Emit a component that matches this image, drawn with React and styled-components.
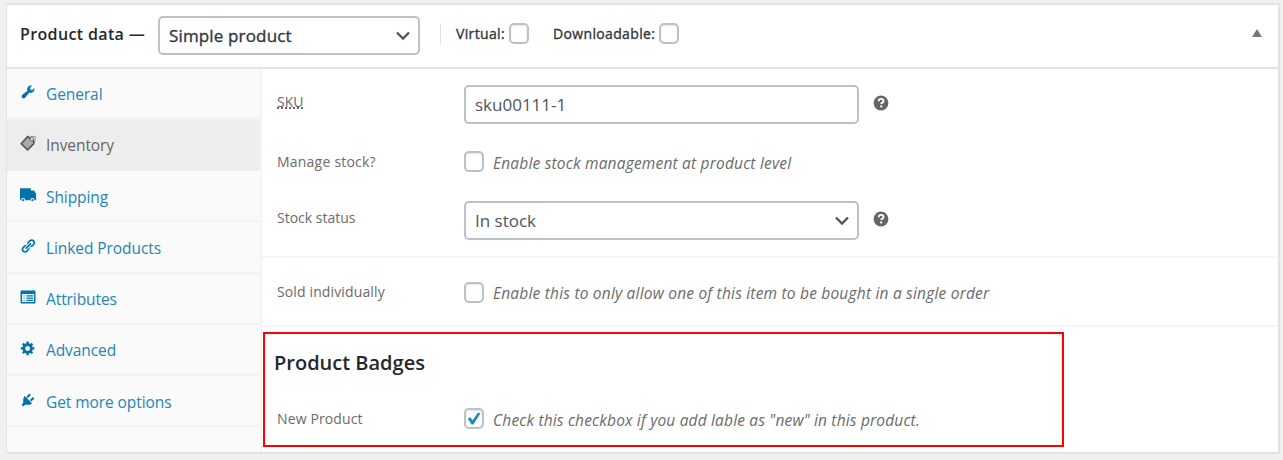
import React from "react";
import styled, { createGlobalStyle } from "styled-components";

const Global = createGlobalStyle`
  * { box-sizing: border-box; }
  body {
    margin: 0;
    background: #f0f0f0;
    font-family: "Open Sans", "Noto Sans", sans-serif;
    color: #32373c;
    overflow: hidden;
  }
`;

const Page = styled.div`
  height: 460px;
  padding: 3px 3px 6px 6px;
`;
const MetaBox = styled.section`
  height: 451px;
  display: flex;
  flex-direction: column;
  background: #fff;
  border: 2px solid #e1e3e5;
  border-left-width: 1px;
`;
const Header = styled.header`
  height: 64px;
  flex: none;
  display: flex;
  align-items: center;
  padding: 0 16px 2px 13px;
  border-bottom: 2px solid #e5e5e6;
`;
const Text = styled.span`
  white-space: nowrap;
  line-height: 20px;
  font-size: ${(p) => p.$size || 15}px;
  font-weight: ${(p) => p.$weight || 400};
  letter-spacing: ${(p) => p.$track || 0}px;
  -webkit-text-stroke: ${(p) => (p.$medium ? "0.35px currentColor" : "0")};
`;
const Title = styled(Text)`
  width: 138px;
  color: #23282d;
  padding-bottom: 3px;
`;
const Field = styled.div`
  width: ${(p) => p.$width}px;
  height: 39px;
  display: flex;
  align-items: center;
  justify-content: space-between;
  padding: ${(p) => p.$drop || 0}px 7px 0 9px;
  border: 2px solid #bcc1c6;
  border-radius: 5px;
  background: #fff;
  color: ${(p) => p.$color || "#50565c"};
`;
const HeaderOptions = styled.div`
  height: 20px;
  display: flex;
  align-items: center;
  margin: 0 0 3px 20px;
  padding-left: 15px;
  border-left: 1px solid #e2e2e2;
`;
const Option = styled.label`
  width: ${(p) => p.$width}px;
  margin-right: ${(p) => p.$gap || 0}px;
  display: flex;
  align-items: center;
  justify-content: space-between;
  color: #32373c;
`;
const Box = styled.span`
  width: 20px;
  height: 21px;
  flex: none;
  display: flex;
  align-items: center;
  justify-content: center;
  border: 2px solid #bcc1c6;
  border-radius: 5px;
  background: #fff;
  box-shadow: inset 0 1px 2px rgba(0, 0, 0, 0.1);
`;
const Toggle = styled.svg`
  margin: 0 0 5px auto;
`;
const Body = styled.div`
  flex: 1;
  display: flex;
`;
const Sidebar = styled.nav`
  width: 255px;
  flex: none;
  padding-right: 1px;
  background: #fafafa;
  border-right: 1px solid #eee;
`;
const Tab = styled.a`
  height: ${(p) => p.$height}px;
  display: flex;
  align-items: center;
  padding: ${(p) => p.$drop}px 0 0 13px;
  border-bottom: 2px solid ${(p) => (p.$active ? "#ededed" : "#f3f3f3")};
  background: ${(p) => (p.$active ? "#ededed" : "transparent")};
  color: ${(p) => (p.$active ? "#666" : "#2585b5")};
`;
const TabIcon = styled.svg`
  width: 16px;
  height: 16px;
  flex: none;
  margin: 0 10px 3px 0;
  color: ${(p) => (p.$active ? "#666" : "#0073aa")};
`;
const Panel = styled.main`
  flex: 1;
  display: flex;
  flex-direction: column;
  color: #6b6b6b;
`;
const Group = styled.div`
  height: ${(p) => p.$height}px;
  padding-top: ${(p) => p.$top}px;
  border-bottom: 2px solid #f5f5f5;
`;
const Row = styled.div`
  height: ${(p) => p.$height}px;
  display: flex;
  align-items: center;
  padding-left: ${(p) => (p.$inset ? 12 : 15)}px;
`;
const Label = styled(Text)`
  width: 187px;
  padding-bottom: ${(p) => p.$lift || 0}px;
  flex: none;
  abbr { text-decoration: underline dotted 1.5px; text-underline-offset: 1px; }
`;
const Hint = styled(Text)`
  font-style: italic;
  margin-left: 9px;
  padding-top: 2px;
`;
const Help = styled.svg`
  margin: 0 0 3px 14px;
`;
const Highlight = styled.section`
  width: 801px;
  height: 115px;
  margin: 5px 0 0 1px;
  border: 2px solid #ff0000;
`;
const Heading = styled.h2`
  height: 58px;
  margin: 0;
  padding: 17px 0 0 9px;
  color: #23282d;
  line-height: 20px;
`;

const Chevron = () => (
  <svg width="16" height="12" viewBox="0 0 16 12" fill="none" stroke="#555" strokeWidth="2.3">
    <path d="M2 2.500 8 8.500 14 2.500" />
  </svg>
);
const HelpTip = () => (
  <Help width="16" height="16" viewBox="0 0 16 16">
    <circle cx="8" cy="8" r="7.4" fill="#666" />
    <path d="M5.7 6.2C5.7 4.6 6.7 3.9 8.1 3.9c1.5 0 2.4.8 2.4 2 0 1.7-2.2 1.7-2.2 3.2" fill="none" stroke="#fff" strokeWidth="1.9" />
    <rect x="7.2" y="10.4" width="2" height="2" fill="#fff" />
  </Help>
);
const Check = ({ on }) => (
  <Box>
    {on && (
      <svg width="16" height="17" viewBox="0 0 16 17">
        <path d="M1.7 8.8 4.3 7.3 6.5 10.3 11.9 2.700 14.500 3.200 7.400 14.400 5.600 14.400Z" fill="#1e8cbe" />
      </svg>
    )}
  </Box>
);

const icons = {
  wrench: (
    <path fill="currentColor" d="M16.680 9.770c-1.340 1.340-3.300 1.670-4.950.990l-5.410 6.520c-.990.990-2.590.990-3.580 0s-.990-2.590 0-3.570l6.520-5.420c-.680-1.650-.350-3.610.990-4.950 1.280-1.280 3.120-1.620 4.720-1.060l-2.890 2.890 2.820 2.820 2.860-2.870c.530 1.580.180 3.390-1.080 4.650z" />
  ),
  tag: (
    <g stroke="#555">
      <path d="M1.500 11 9.500 2 17.500 8 17 11 9.500 18.500Z" fill="#aaa" strokeWidth="2" />
      <path d="M12 1.800h7v6" fill="none" strokeWidth="1.200" opacity=".6" />
      <circle cx="14.800" cy="5.300" r="2.200" fill="#ddd" strokeWidth="1" />
    </g>
  ),
  truck: (
    <g fill="currentColor">
      <path d="M0 1.500h13.500v3h4l2.500 3.500v8.500H0Z" />
      <circle cx="4" cy="16.500" r="2" stroke="#fafafa" strokeWidth="1.300" />
      <circle cx="15.500" cy="16.500" r="2" stroke="#fafafa" strokeWidth="1.300" />
    </g>
  ),
  link: (
    <path fill="currentColor" d="M17.740 2.760c1.680 1.690 1.680 4.410 0 6.100l-1.530 1.520c-1.120 1.120-2.700 1.470-4.140 1.090l2.620-2.610.760-.770.760-.760c.840-.840.840-2.200 0-3.040-.840-.850-2.200-.850-3.040 0l-.770.760-3.380 3.380c-.370-1.440-.020-3.020 1.100-4.140l1.520-1.530c1.690-1.680 4.420-1.680 6.100 0zM8.590 13.430l5.340-5.340c.420-.420.420-1.100 0-1.520-.440-.430-1.130-.390-1.530 0l-5.330 5.340c-.420.420-.420 1.100 0 1.520.440.430 1.130.390 1.520 0zm-.760 2.290l4.140-4.150c.380 1.440.030 3.020-1.090 4.140l-1.520 1.530c-1.690 1.680-4.410 1.680-6.100 0-1.680-1.680-1.680-4.420 0-6.100l1.530-1.520c1.120-1.120 2.700-1.470 4.140-1.100l-4.140 4.150c-.850.840-.850 2.200 0 3.050.840.840 2.200.840 3.040 0z" />
  ),
  form: (
    <g>
      <path fill="currentColor" fillRule="evenodd" d="M1.500 2h17q.8 0 .8.800v14.400q0 .8-.8.800h-17q-.8 0-.8-.800V2.800q0-.8.800-.800ZM2.600 6.400v10h14.800v-10Z" />
      <path stroke="currentColor" strokeWidth="1.700" d="M8 8.600h8.200M8 11.400h8.200M8 14.200h8.200" />
      <path stroke="currentColor" strokeWidth="1.700" opacity=".5" d="M4.200 8.600h2M4.200 11.400h2M4.200 14.200h2" />
    </g>
  ),
  gear: (
    <path fill="currentColor" d="M18 12h-2.180c-.170.700-.440 1.350-.810 1.930l1.540 1.540-2.100 2.100-1.540-1.540c-.580.360-1.230.630-1.910.790V19H8v-2.180c-.680-.160-1.330-.430-1.910-.790l-1.540 1.540-2.120-2.120 1.540-1.540c-.360-.580-.630-1.230-.790-1.910H1V9.030h2.170c.160-.700.440-1.350.800-1.940L2.430 5.550l2.100-2.100 1.540 1.540c.580-.370 1.240-.640 1.930-.810V2h3v2.180c.680.160 1.330.430 1.910.790l1.540-1.540 2.120 2.120-1.540 1.540c.360.590.640 1.240.800 1.940H18V12zm-8.500 1.500c1.660 0 3-1.340 3-3s-1.340-3-3-3-3 1.340-3 3 1.340 3 3 3z" />
  ),
  plug: (
    <path fill="currentColor" d="M13.110 4.360L9.870 7.600 8 5.730l3.240-3.240c.350-.340 1.050-.200 1.560.320.520.510.660 1.210.310 1.550zm-8 1.770l.910-1.120 9.010 9.010-1.190.840c-.710.710-2.630 1.160-3.820 1.160H6.140L4.900 17.260c-.590.590-1.540.590-2.120 0-.590-.580-.590-1.530 0-2.120l1.240-1.240v-3.880c0-1.130.400-3.190 1.090-3.890zm7.260 3.970l3.240-3.240c.340-.350 1.040-.210 1.550.310.520.510.660 1.210.310 1.550l-3.240 3.250z" />
  ),
};

const tabs = [
  { name: "General", icon: "wrench", height: 51, drop: 0 },
  { name: "Inventory", icon: "tag", height: 51, drop: 0 },
  { name: "Shipping", icon: "truck", height: 51, drop: 2 },
  { name: "Linked Products", icon: "link", height: 52, drop: 1 },
  { name: "Attributes", icon: "form", height: 51, drop: 0 },
  { name: "Advanced", icon: "gear", height: 51, drop: 0 },
  { name: "Get more options", icon: "plug", height: 51, drop: 2 },
];

export default function App() {
  return (
    <Page>
      <Global />
      <MetaBox>
        <Header>
          <Title $size={16} $weight={600} $track={0.36}>Product data —</Title>
          <Field $width={262} $color="#32373c" $drop={2}>
            <Text $size={17} $medium $track={0.15}>Simple product</Text>
            <Chevron />
          </Field>
          <HeaderOptions>
            <Option $width={73} $gap={24}><Text $size={14} $medium $track={0.35}>Virtual:</Text><Check /></Option>
            <Option $width={126}><Text $size={14} $medium $track={0.35}>Downloadable:</Text><Check /></Option>
          </HeaderOptions>
          <Toggle width="10" height="8" viewBox="0 0 10 8"><path d="M0 8 5 0 10 8Z" fill="#72777c" /></Toggle>
        </Header>
        <Body>
          <Sidebar>
            {tabs.map(({ name, icon, height, drop }) => (
              <Tab key={name} $active={icon === "tag"} $height={height} $drop={drop}>
                <TabIcon viewBox="0 0 20 20" $active={icon === "tag"}>{icons[icon]}</TabIcon>
                <Text $size={15.5} $track={-0.08}>{name}</Text>
              </Tab>
            ))}
          </Sidebar>
          <Panel>
            <Group $height={189} $top={8}>
              <Row $height={54}>
                <Label $size={14} $lift={5}><abbr>SKU</abbr></Label>
                <Field $width={395} $drop={2}><Text $size={17}>sku00111-1</Text></Field>
                <HelpTip />
              </Row>
              <Row $height={61}>
                <Label $size={14} $track={0.22}>Manage stock?</Label>
                <Check />
                <Hint $size={15.5} $track={0.19}>Enable stock management at product level</Hint>
              </Row>
              <Row $height={57}>
                <Label $size={14} $lift={6}>Stock status</Label>
                <Field $width={395} $drop={1}><Text $size={17}>In stock</Text><Chevron /></Field>
                <HelpTip />
              </Row>
            </Group>
            <Group $height={69} $top={0}>
              <Row $height={68}>
                <Label $size={14} $track={0.13}>Sold individually</Label>
                <Check />
                <Hint $size={15.5} $track={0.2}>Enable this to only allow one of this item to be bought in a single order</Hint>
              </Row>
            </Group>
            <Highlight>
              <Heading><Text $size={20} $weight={600}>Product Badges</Text></Heading>
              <Row $height={53} $inset>
                <Label $size={14} $track={0.13}>New Product</Label>
                <Check on />
                <Hint $size={15.5} $track={0.17}>Check this checkbox if you add lable as "new" in this product.</Hint>
              </Row>
            </Highlight>
          </Panel>
        </Body>
      </MetaBox>
    </Page>
  );
}
